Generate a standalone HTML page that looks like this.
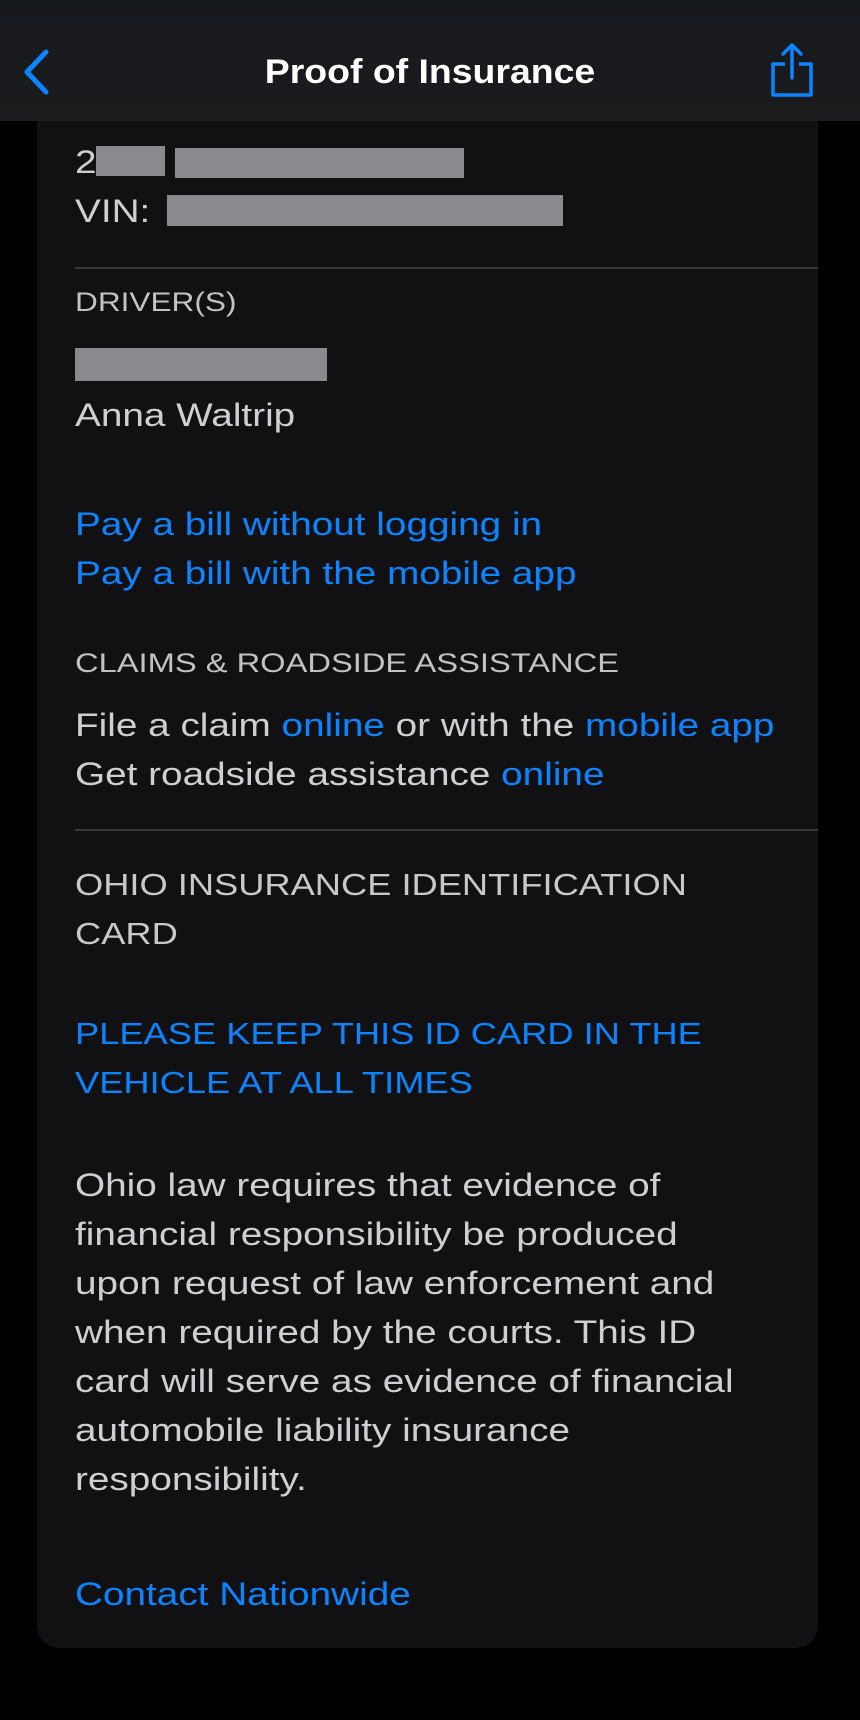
<!DOCTYPE html>
<html><head><meta charset="utf-8"><style>
body{margin:0;width:860px;height:1720px;background:#000;position:relative;overflow:hidden;font-family:"Liberation Sans",sans-serif;}
.nav{position:absolute;left:0;top:0;width:860px;height:121px;background:linear-gradient(#15181d,#1c1c1e);}
.card{position:absolute;left:37px;top:100px;width:781px;height:1548px;background:#111113;border-radius:22px;}
.t{position:absolute;left:75px;white-space:nowrap;color:#cfcfd3;font-size:32px;line-height:49px;transform:scaleX(1.21);transform-origin:0 0;}
.u{transform:scaleX(1.17);}
.h{font-size:27px;color:#c2c2c6;}
.b{color:#0a84ff;}
.r{position:absolute;background:#8a898e;}
.hr{position:absolute;left:75px;width:743px;height:2px;background:#38383a;}
</style></head><body>
<div class="card"></div>
<div class="nav"></div>
<svg style="position:absolute;left:20px;top:48px" width="32" height="48" viewBox="0 0 32 48"><path d="M26 4 L7 24 L26 44" fill="none" stroke="#0a84ff" stroke-width="5" stroke-linecap="round" stroke-linejoin="round"/></svg>
<div style="position:absolute;left:0;width:860px;top:50px;text-align:center;color:#fff;font-size:34px;font-weight:bold;line-height:44px;transform:scaleX(1.1);">Proof of Insurance</div>
<svg style="position:absolute;left:768px;top:42px" width="48" height="56" viewBox="0 0 48 56"><path d="M17 22 H5 V53 H43 V22 H31" fill="none" stroke="#0a84ff" stroke-width="3.5" stroke-linejoin="round"/><path d="M24 36 V4 M15 12 L24 3 L33 12" fill="none" stroke="#0a84ff" stroke-width="3.5" stroke-linecap="round" stroke-linejoin="round"/></svg>

<div class="t" style="top:138px">2</div>
<div class="r" style="left:96px;top:146px;width:69px;height:30px"></div>
<div class="r" style="left:175px;top:148px;width:289px;height:30px"></div>
<div class="t" style="top:187px">VIN:</div>
<div class="r" style="left:167px;top:195px;width:396px;height:31px"></div>
<div class="hr" style="top:267px"></div>
<div class="t h u" style="top:278px">DRIVER(S)</div>
<div class="r" style="left:75px;top:348px;width:252px;height:33px"></div>
<div class="t" style="top:391px">Anna Waltrip</div>
<div class="t b" style="top:500px">Pay a bill without logging in<br>Pay a bill with the mobile app</div>
<div class="t h" style="top:639px">CLAIMS &amp; ROADSIDE ASSISTANCE</div>
<div class="t" style="top:701px">File a claim <span class="b">online</span> or with the <span class="b">mobile app</span><br>Get roadside assistance <span class="b">online</span></div>
<div class="hr" style="top:829px"></div>
<div class="t u" style="top:860px;font-size:31px;color:#c8c8cc">OHIO INSURANCE IDENTIFICATION<br>CARD</div>
<div class="t b u" style="top:1009px;font-size:31px">PLEASE KEEP THIS ID CARD IN THE<br>VEHICLE AT ALL TIMES</div>
<div class="t" style="top:1161px">Ohio law requires that evidence of<br>financial responsibility be produced<br>upon request of law enforcement and<br>when required by the courts. This ID<br>card will serve as evidence of financial<br>automobile liability insurance<br>responsibility.</div>
<div class="t b" style="top:1570px">Contact Nationwide</div>
</body></html>
